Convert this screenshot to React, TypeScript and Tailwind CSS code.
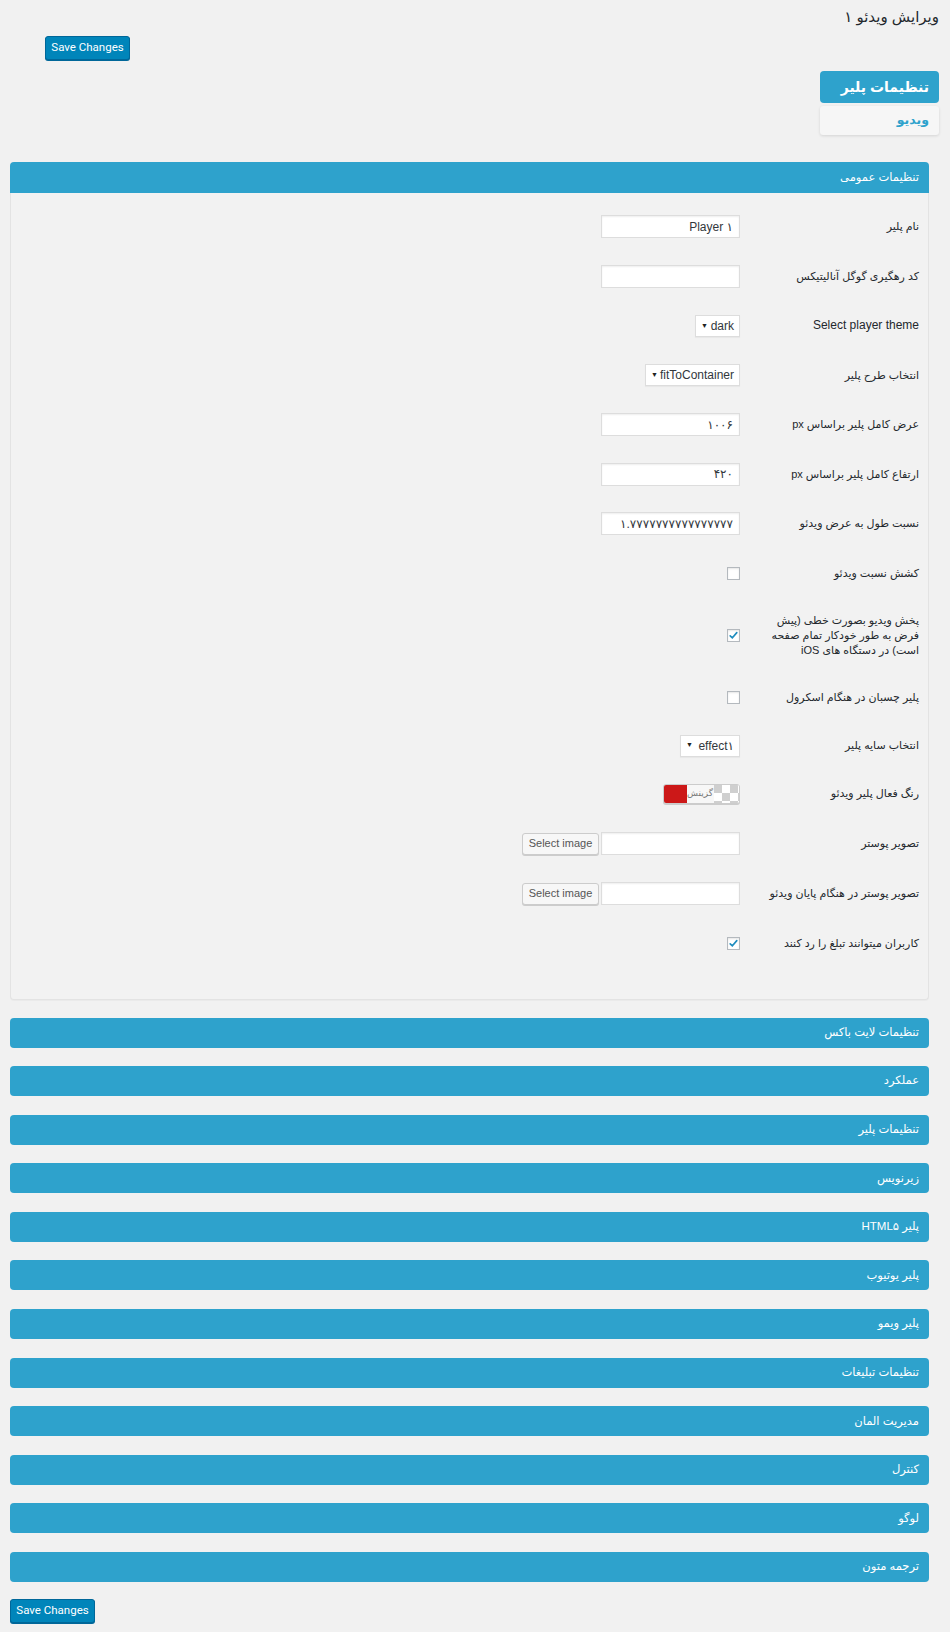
import React from "react"

const sections = [
  "تنظیمات لایت باکس",
  "عملکرد",
  "تنظیمات پلیر",
  "زیرنویس",
  "پلیر HTML۵",
  "پلیر یوتیوب",
  "پلیر ویمو",
  "تنظیمات تبلیغات",
  "مدیریت المان",
  "کنترل",
  "لوگو",
  "ترجمه متون",
]

const SaveButton = () => (
  <button
    type="button"
    className="h-[24px] w-[85px] rounded-[3px] border border-[#006799] bg-[#0085ba] font-['Roboto',sans-serif] text-[11.5px] leading-none text-white shadow-[0_1px_0_#006799]"
  >
    Save Changes
  </button>
)

const TextInput = ({ value = "" }: { value?: string }) => (
  <div className="flex h-[23px] w-[139px] items-center overflow-hidden border border-[#dddddd] bg-white px-[6px] text-[12px] text-[#32373c] shadow-[inset_0_1px_2px_rgba(0,0,0,0.07)]">
    {value}
  </div>
)

const FakeSelect = ({ value, width }: { value: string; width: string }) => (
  <div
    className={`flex h-[22px] items-center justify-between overflow-hidden border border-[#dddddd] bg-white pr-[5px] pl-[5px] text-[12px] text-[#32373c] shadow-[0_1px_1px_rgba(0,0,0,0.04)] ${width}`}
  >
    <span className="whitespace-nowrap">{value}</span>
    <span className="shrink-0 text-[7px] text-[#222]">▼</span>
  </div>
)

const Checkbox = ({ checked = false }: { checked?: boolean }) => (
  <div className="flex h-[13px] w-[13px] items-center justify-center border border-[#b4b9be] bg-white shadow-[inset_0_1px_2px_rgba(0,0,0,0.1)]">
    {checked && (
      <svg viewBox="0 0 16 16" className="h-[13px] w-[13px]">
        <path d="M3.2 8.4 L6.4 11.4 L12.8 3.8" fill="none" stroke="#1e8cbe" strokeWidth="2.4" strokeLinecap="round" strokeLinejoin="round" />
      </svg>
    )}
  </div>
)

const ColorPicker = () => (
  <div className="flex h-[20px] w-[77px] overflow-hidden rounded-[3px] border border-[#cccccc] bg-[#f7f7f7] shadow-[0_1px_0_#cccccc]" dir="ltr">
    <div className="h-full w-[24px] bg-[#cc1818]" />
    <div className="flex flex-1 items-center justify-end pr-[1px] text-[9px] text-[#777]">گزینش</div>
    <svg width="25" height="20" className="shrink-0">
      <defs>
        <pattern id="chk" width="16" height="16" patternUnits="userSpaceOnUse">
          <rect width="16" height="16" fill="#ffffff" />
          <rect width="8" height="8" fill="#cfcfcf" />
          <rect x="8" y="8" width="8" height="8" fill="#cfcfcf" />
        </pattern>
      </defs>
      <rect width="25" height="20" fill="url(#chk)" />
    </svg>
  </div>
)

const ImagePicker = () => (
  <div className="flex items-center gap-[2px]">
    <TextInput />
    <button
      type="button"
      className="h-[22px] w-[77px] rounded-[3px] border border-[#cccccc] bg-[#f7f7f7] font-['Liberation_Sans',sans-serif] text-[11px] text-[#555] shadow-[0_1px_0_#cccccc]"
    >
      Select image
    </button>
  </div>
)

type Row = { label: string; control: React.ReactNode; h: string; latin?: boolean }

const rows: Row[] = [
  { label: "نام پلیر", control: <TextInput value="Player ۱" />, h: "h-[49.5px]" },
  { label: "کد رهگیری گوگل آنالیتیکس", control: <TextInput />, h: "h-[49.5px]" },
  { label: "Select player theme", control: <FakeSelect value="dark" width="w-[45px]" />, h: "h-[49.5px]", latin: true },
  { label: "انتخاب طرح پلیر", control: <FakeSelect value="fitToContainer" width="w-[95px]" />, h: "h-[49.5px]" },
  { label: "عرض کامل پلیر براساس px", control: <TextInput value="۱۰۰۶" />, h: "h-[49.5px]" },
  { label: "ارتفاع کامل پلیر براساس px", control: <TextInput value="۴۲۰" />, h: "h-[49.5px]" },
  { label: "نسبت طول به عرض ویدئو", control: <TextInput value="۱.۷۷۷۷۷۷۷۷۷۷۷۷۷۷۷۷" />, h: "h-[49.5px]" },
  { label: "کشش نسبت ویدئو", control: <Checkbox />, h: "h-[49.5px]" },
  {
    label: "پخش ویدیو بصورت خطی (پیش فرض به طور خودکار تمام صفحه است) در دستگاه های iOS",
    control: <Checkbox checked />,
    h: "h-[75px]",
  },
  { label: "پلیر چسبان در هنگام اسکرول", control: <Checkbox />, h: "h-[49.5px]" },
  { label: "انتخاب سایه پلیر", control: <FakeSelect value="effect۱" width="w-[60px]" />, h: "h-[46px]" },
  { label: "رنگ فعال پلیر ویدئو", control: <ColorPicker />, h: "h-[50px]" },
  { label: "تصویر پوستر", control: <ImagePicker />, h: "h-[50px]" },
  { label: "تصویر پوستر در هنگام پایان ویدئو", control: <ImagePicker />, h: "h-[50px]" },
  { label: "کاربران میتوانند تبلغ را رد کنند", control: <Checkbox checked />, h: "h-[50px]" },
]

export default function App() {
  return (
    <div
      dir="rtl"
      className="min-h-[1632px] bg-[#f1f1f1] pr-[11px] pl-[10px] font-['Liberation_Sans','DejaVu_Sans',sans-serif] text-[#23282d]"
    >
      <h1 className="pt-[7px] text-[15px] leading-[20px]">ویرایش ویدئو ۱</h1>

      <div className="mt-[9px] flex justify-end pl-[35px]">
        <SaveButton />
      </div>

      {/* tabs */}
      <div className="mt-[11px] flex w-[119px] flex-col gap-[3px]">
        <div className="flex h-[32px] items-center rounded-[4px] bg-[#2ea2cc] pr-[10px] text-[14px] font-bold text-white">
          تنظیمات پلیر
        </div>
        <div className="flex h-[29px] items-center rounded-[3px] bg-[#f6f6f6] pr-[10px] text-[12.5px] font-bold text-[#2ea2cc] shadow-[0_1px_3px_rgba(0,0,0,0.12)]">
          ویدیو
        </div>
      </div>

      <div className="mt-[27px] mr-[10px]">
        {/* open section */}
        <div className="flex h-[31px] items-center rounded-t-[4px] bg-[#2ea2cc] pr-[10px] text-[11.5px] text-white">
          تنظیمات عمومی
        </div>
        <div className="rounded-b-[4px] border border-t-0 border-[#e3e3e3] bg-[#f2f2f2] pt-[9px] pr-[9px] pb-[30px] shadow-[0_1px_1px_rgba(0,0,0,0.03)]">
          {rows.map((row) => (
            <div key={row.label} className={`flex items-center ${row.h}`}>
              <div
                className={`w-[152px] shrink-0 leading-[15px] text-[#23282d] ${row.latin ? "text-[12px]" : "text-[11px]"}`}
              >
                {row.label}
              </div>
              <div className="mr-[27px] flex">{row.control}</div>
            </div>
          ))}
        </div>

        {/* collapsed sections */}
        <div className="mt-[18px] flex flex-col gap-[18.6px]">
          {sections.map((s) => (
            <div
              key={s}
              className="flex h-[30px] items-center rounded-[4px] bg-[#2ea2cc] pr-[10px] text-[11.5px] text-white"
            >
              {s}
            </div>
          ))}
        </div>
      </div>

      <div className="mt-[17px] flex justify-end">
        <SaveButton />
      </div>
    </div>
  )
}
